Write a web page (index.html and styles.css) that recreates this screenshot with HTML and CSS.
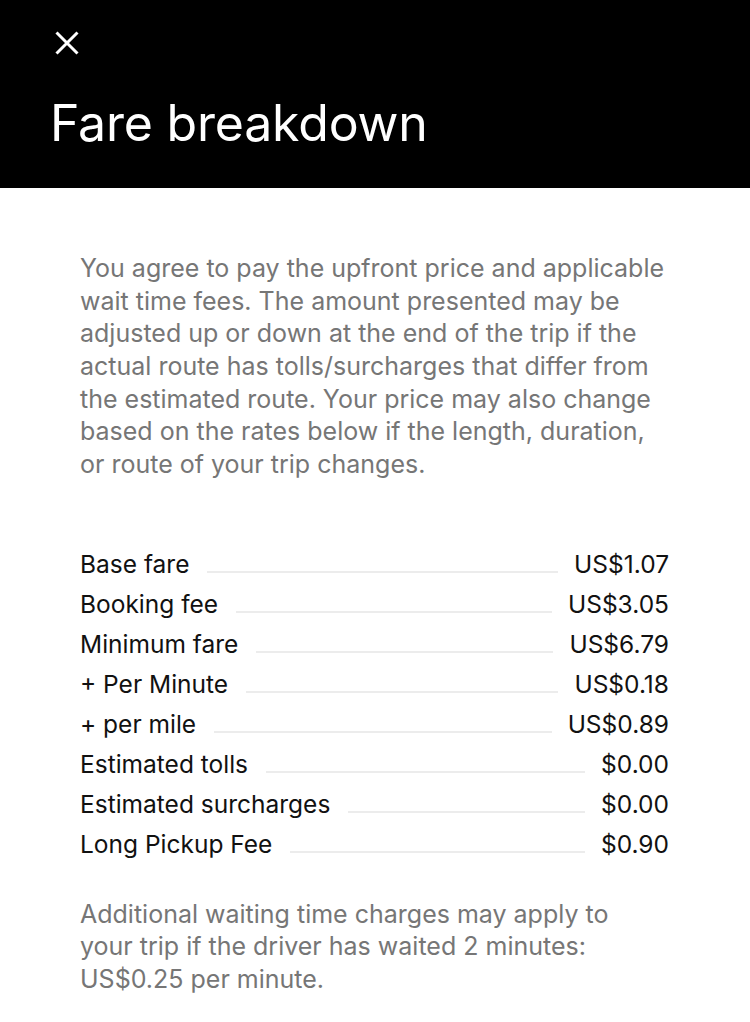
FILE: index.html
```html
<!DOCTYPE html>
<html lang="en">
<head>
<meta charset="utf-8">
<title>Fare breakdown</title>
<link rel="stylesheet" href="styles.css">
</head>
<body>
<header class="top">
  <button class="close" aria-label="Close">
    <svg width="24" height="24" viewBox="0 0 24 24"><path d="M1.5 1.5 L22.5 22.5 M22.5 1.5 L1.5 22.5" stroke="#fff" stroke-width="3" fill="none"/></svg>
  </button>
  <h1 class="title">Fare breakdown</h1>
</header>
<main class="content">
  <p class="note">You agree to pay the upfront price and applicable wait time fees. The amount presented may be adjusted up or down at the end of the trip if the actual route has tolls/surcharges that differ from the estimated route. Your price may also change based on the rates below if the length, duration, or route of your trip changes.</p>
  <ul class="rates">
    <li class="row"><span class="label">Base fare</span><span class="leader"></span><span class="value">US$1.07</span></li>
    <li class="row"><span class="label">Booking fee</span><span class="leader"></span><span class="value">US$3.05</span></li>
    <li class="row"><span class="label">Minimum fare</span><span class="leader"></span><span class="value">US$6.79</span></li>
    <li class="row"><span class="label">+ Per Minute</span><span class="leader"></span><span class="value">US$0.18</span></li>
    <li class="row"><span class="label">+ per mile</span><span class="leader"></span><span class="value">US$0.89</span></li>
    <li class="row"><span class="label">Estimated tolls</span><span class="leader"></span><span class="value">$0.00</span></li>
    <li class="row"><span class="label">Estimated surcharges</span><span class="leader"></span><span class="value">$0.00</span></li>
    <li class="row"><span class="label">Long Pickup Fee</span><span class="leader"></span><span class="value">$0.90</span></li>
  </ul>
  <p class="note note-wait">Additional waiting time charges may apply to your trip if the driver has waited 2 minutes: US$0.25 per minute.</p>
</main>
</body>
</html>
```
FILE: styles.css
```css
* { box-sizing: border-box; }
html, body { margin: 0; padding: 0; background: #fff; }
body {
  font-family: Inter, "Open Sans", "Liberation Sans", sans-serif;
  color: #000;
  width: 750px;
}
.top {
  background: #000;
  height: 188px;
  padding: 31px 0 0 50px;
  display: flex;
  flex-direction: column;
}
.close {
  background: none;
  border: 0;
  padding: 0;
  margin: 0 0 0 5px;
  width: 24px;
  height: 24px;
  display: block;
}
.close svg { display: block; }
.title {
  margin: 38px 0 0 0;
  font-size: 50px;
  line-height: 60px;
  font-weight: 400;
  color: #fff;
  letter-spacing: -0.2px;
}
.content {
  padding: 64px 81px 0 80px;
}
.note {
  margin: 0;
  font-size: 25px;
  line-height: 32.67px;
  color: #767676;
}
.note-wait { max-width: 570px; }
.rates {
  list-style: none;
  margin: 63px 0 34px 0;
  padding: 0;
}
.row {
  display: flex;
  align-items: baseline;
  height: 40px;
  font-size: 24.5px;
  line-height: 40px;
  color: #111;
}
.label { white-space: nowrap; }
.leader {
  flex: 1;
  height: 2px;
  background: #ececec;
  margin: 0 16px 0 18px;
  align-self: center;
  position: relative;
  top: 8px;
}
.value { white-space: nowrap; text-align: right; }
```
